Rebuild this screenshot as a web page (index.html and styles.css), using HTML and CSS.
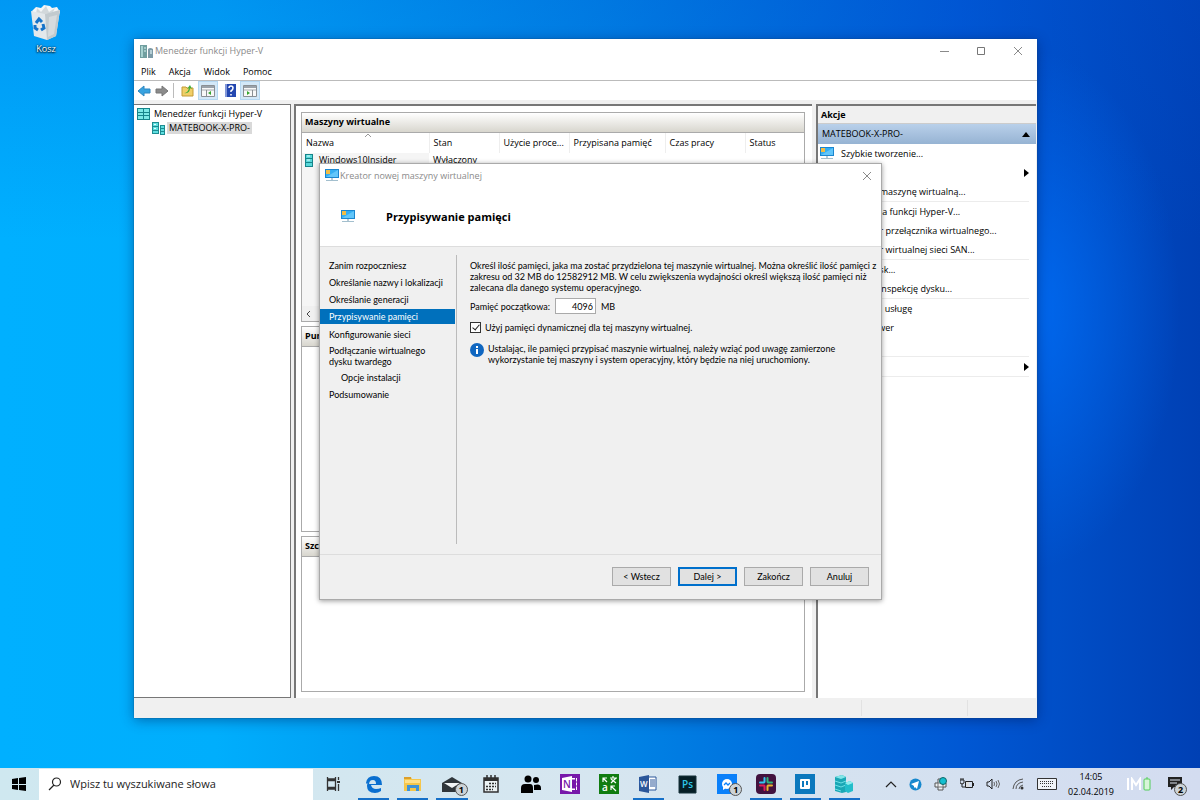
FILE: index.html
```html
<!DOCTYPE html>
<html lang="pl">
<head>
    <meta charset="UTF-8">
    <meta name="viewport" content="width=device-width, initial-scale=1.0">
    <title>Menedżer funkcji Hyper-V</title>
    <link rel="stylesheet" href="styles.css">
</head>
<body>
    <!-- shared icons -->
    <svg class="sprite" aria-hidden="true">
        <symbol id="vm" viewBox="0 0 14 13">
            <path d="M0 0h14v9H0z" fill="#1b86cf"/>
            <path d="M1 1h12v7H1z" fill="#35aef2"/>
            <path d="M1 8l12-7v7z" fill="#62c6fa"/>
            <path d="M1 1h4v4H1z" fill="#f2bd45"/>
            <path d="M6 9h2v2H6z" fill="#b9cbd6"/>
            <path d="M1 11h12v1H1z" fill="#a3bfce"/>
        </symbol>
        <symbol id="servers" viewBox="0 0 13 13">
            <path d="M0 0h7v12H0zM8 3h5v10H8z" fill="#1d8c92"/>
            <path d="M1 1h5v3H1zM1 5h5v3H1zM1 9h5v2H1zM9 4h3v2H9zM9 7h3v2H9zM9 10h3v2H9z" fill="#5fdfe0"/>
            <path d="M2 2h2v1H2zM2 6h2v1H2z" fill="#e4ffff"/>
        </symbol>
        <symbol id="close" viewBox="0 0 10 10">
            <path d="M1 1l8 8M9 1L1 9" stroke="#8a8a8a" fill="none"/>
        </symbol>
        <symbol id="panel" viewBox="0 0 14 12">
            <path d="M.5.5h13v11H.5z" fill="#f8f8f8" stroke="#8a8f94"/>
            <path d="M1 1h12v2H1z" fill="#9aa2aa"/>
            <path d="M1 5h12" stroke="#a5abb0"/>
        </symbol>
    </svg>

    <main class="desktop">
        <a class="shortcut" href="#">
            <svg width="34" height="36" viewBox="0 0 34 36">
                <path d="M3 7l4-4 5 1 3-3 6 1 2 2 5-1 3 5-2 4H5z" fill="#f4f6f7"/>
                <path d="M8 4l4 4 5-6 3 6 6-4-3 6H7z" fill="#d2d8db"/>
                <path d="M2 7l14 3 15-4-4 26-9 4-13-4z" fill="#e3e8eb"/>
                <path d="M16 10l15-4-4 26-9 4z" fill="#c2cace"/>
                <path d="M20 13l8-2-3 19-6 3z" fill="#d6dbde"/>
                <path d="M7 19l3-4 3 3M14 20l1 4-3 2M9 26l-3-2 0-3" fill="none" stroke="#1673c9" stroke-width="3"/>
            </svg>
            <span>Kosz</span>
        </a>

        <section class="window manager">
            <header class="titlebar">
                <svg width="14" height="13" viewBox="0 0 14 13">
                    <path d="M0 0h7v13H0z" fill="#719fa0"/>
                    <path d="M1 1h2v11H1z" fill="#a9d3d1"/>
                    <path d="M4 3h2M4 6h2" stroke="#d9f2ef"/>
                    <path d="M8 4q2-2 5 0v9H8z" fill="#7c9aa6"/>
                    <path d="M10 5h2v4h-2z" fill="#b5ced5"/>
                </svg>
                <h1>Menedżer funkcji Hyper-V</h1>
                <div class="window-buttons">
                    <button aria-label="Minimalizuj"><svg width="10" height="10"><path d="M1 5.500h9" stroke="#8a8a8a"/></svg></button>
                    <button aria-label="Maksymalizuj"><svg width="10" height="10"><path d="M1.500 1.500h7v7h-7z" fill="none" stroke="#777"/></svg></button>
                    <button aria-label="Zamknij"><svg width="10" height="10"><use href="#close"/></svg></button>
                </div>
            </header>

            <nav class="menubar">
                <button>Plik</button>
                <button>Akcja</button>
                <button>Widok</button>
                <button>Pomoc</button>
            </nav>

            <div class="toolbar">
                <button aria-label="Wstecz"><svg width="14" height="12"><path d="M1 6l6-5v3h6v4H7v3z" fill="#38a3e0" stroke="#2e86c0"/></svg></button>
                <button aria-label="Dalej"><svg width="14" height="12"><path d="M13 6L7 1v3H1v4h6v3z" fill="#8b8b8b" stroke="#777"/></svg></button>
                <span class="separator"></span>
                <button aria-label="W górę"><svg width="13" height="13"><path d="M1 3h4l1 1h6v8H1z" fill="#f1cf68" stroke="#c29b37"/><path d="M3 9q4 0 5-5l-2 1 3-4 2 4-2-1q0 6-6 5z" fill="#3fae3b"/></svg></button>
                <button class="on" aria-label="Drzewo konsoli"><svg width="14" height="12"><use href="#panel"/><path d="M5.500 5v7" stroke="#8a8f94"/><path d="M10 6v4L7 8z" fill="#35a52f"/></svg></button>
                <button aria-label="Pomoc"><svg width="11" height="13"><path d="M0 0h11v13H0z" fill="#2447b0"/><path d="M0 0h2v13H0z" fill="#8398d8"/><path d="M4 4q0-2 2-2t2 2-2 3v1M6 10v1.500" fill="none" stroke="#fff" stroke-width="1.500"/></svg></button>
                <button class="on" aria-label="Okienko akcji"><svg width="14" height="12"><use href="#panel"/><path d="M9.500 5v7" stroke="#8a8f94"/><path d="M4 6v4l3-2z" fill="#35a52f"/></svg></button>
            </div>

            <div class="panes">
                <ul class="tree">
                    <li><svg width="13" height="12" viewBox="0 0 13 12"><path d="M0 0h13v12H0z" fill="#16858b"/><path d="M1 1h5v3H1zM7 1h5v3H7zM1 5h5v2H1zM7 5h5v2H7zM1 8h5v3H1zM7 8h5v3H7z" fill="#7de9e6"/></svg><span>Menedżer funkcji Hyper-V</span></li>
                    <li class="child"><svg width="13" height="13"><use href="#servers"/></svg><span class="selected">MATEBOOK-X-PRO-</span></li>
                </ul>

                <div class="center">
                    <section class="group machines">
                        <h2>Maszyny wirtualne</h2>
                        <table>
                            <thead>
                                <tr>
                                    <th class="name">Nazwa<svg class="sort" width="6" height="4"><path d="M0 4l3-3 3 3" fill="none" stroke="#999"/></svg></th>
                                    <th class="narrow">Stan</th>
                                    <th class="narrow">Użycie proce...</th>
                                    <th class="memory">Przypisana pamięć</th>
                                    <th class="uptime">Czas pracy</th>
                                    <th>Status</th>
                                </tr>
                            </thead>
                            <tbody>
                                <tr>
                                    <td><span class="machine"><svg width="8" height="13"><path d="M0 0h8v13H0z" fill="#16858b"/><path d="M1 1h6v3H1zM1 5h6v3H1zM1 9h6v3H1z" fill="#58d8da"/><path d="M2 2h3M2 6h3" stroke="#e0ffff"/></svg>Windows10Insider</span></td>
                                    <td>Wyłączony</td>
                                    <td></td>
                                    <td></td>
                                    <td></td>
                                    <td></td>
                                </tr>
                            </tbody>
                        </table>
                        <div class="scroll"><button aria-label="Przewiń w lewo"><svg width="5" height="8"><path d="M4 1L1 4l3 3" fill="none" stroke="#444"/></svg></button></div>
                    </section>
                    <section class="group checkpoints">
                        <h2>Punkty kontrolne</h2>
                    </section>
                    <section class="group details">
                        <h2>Szczegóły</h2>
                    </section>
                </div>

                <aside class="actions">
                    <h2>Akcje</h2>
                    <h3>MATEBOOK-X-PRO-<svg width="8" height="5"><path d="M0 5l4-5 4 5z"/></svg></h3>
                    <ul>
                        <li><svg width="14" height="13"><use href="#vm"/></svg><span>Szybkie tworzenie...</span></li>
                        <li><svg class="more" width="5" height="8"><path d="M0 0l5 4-5 4z"/></svg></li>
                        <li class="indent">Importuj maszynę wirtualną...</li>
                        <li class="indent line">Ustawienia funkcji Hyper-V...</li>
                        <li class="indent">Menedżer przełącznika wirtualnego...</li>
                        <li class="indent">Menedżer wirtualnej sieci SAN...</li>
                        <li class="indent line">Edytuj dysk...</li>
                        <li class="indent">Wykonaj inspekcję dysku...</li>
                        <li class="indent line">Zatrzymaj usługę</li>
                        <li class="indent">Usuń serwer</li>
                        <li></li>
                        <li class="line last"><svg class="more" width="5" height="8"><path d="M0 0l5 4-5 4z"/></svg></li>
                    </ul>
                </aside>
            </div>

            <footer class="statusbar"><span></span><span></span></footer>
        </section>

        <section class="window wizard">
            <header class="titlebar">
                <svg width="14" height="13"><use href="#vm"/></svg>
                <h1>Kreator nowej maszyny wirtualnej</h1>
                <div class="window-buttons">
                    <button aria-label="Zamknij"><svg width="10" height="10"><use href="#close"/></svg></button>
                </div>
            </header>
            <div class="banner">
                <svg width="14" height="13"><use href="#vm"/></svg>
                <h2>Przypisywanie pamięci</h2>
            </div>
            <div class="wizard-body">
                <ol class="steps">
                    <li>Zanim rozpoczniesz</li>
                    <li>Określanie nazwy i lokalizacji</li>
                    <li>Określanie generacji</li>
                    <li class="current">Przypisywanie pamięci</li>
                    <li>Konfigurowanie sieci</li>
                    <li class="two-lines">Podłączanie wirtualnego<br>dysku twardego</li>
                    <li class="sub">Opcje instalacji</li>
                    <li>Podsumowanie</li>
                </ol>
                <form class="page">
                    <p>Określ ilość pamięci, jaka ma zostać przydzielona tej maszynie wirtualnej. Można określić ilość pamięci z<br>zakresu od 32 MB do 12582912 MB. W celu zwiększenia wydajności określ większą ilość pamięci niż<br>zalecana dla danego systemu operacyjnego.</p>
                    <div class="field">
                        <label for="memory">Pamięć początkowa:</label>
                        <input type="text" id="memory" value="4096">
                        <span>MB</span>
                    </div>
                    <div class="check">
                        <input type="checkbox" id="dynamic" checked>
                        <label for="dynamic">Użyj pamięci dynamicznej dla tej maszyny wirtualnej.</label>
                    </div>
                    <div class="info">
                        <svg width="14" height="14"><circle cx="7" cy="7" r="7" fill="#0f66c0"/><path d="M7 3v2M7 6v5" stroke="#fff" stroke-width="2"/></svg>
                        <p>Ustalając, ile pamięci przypisać maszynie wirtualnej, należy wziąć pod uwagę zamierzone<br>wykorzystanie tej maszyny i system operacyjny, który będzie na niej uruchomiony.</p>
                    </div>
                </form>
            </div>
            <footer class="wizard-buttons">
                <button>&lt; Wstecz</button>
                <button class="default">Dalej &gt;</button>
                <button>Zakończ</button>
                <button>Anuluj</button>
            </footer>
        </section>
    </main>

    <footer class="taskbar">
        <button class="start" aria-label="Start"><svg width="14" height="14"><path d="M0 2l6-1v6H0zM7 1l7-1v7H7zM0 8h6v5l-6-1zM7 8h7v6l-7-1z"/></svg></button>
        <div class="search">
            <svg width="14" height="14"><circle cx="8.500" cy="5" r="4" fill="none" stroke="#222" stroke-width="1.200"/><path d="M6 8l-5 5" stroke="#222" stroke-width="1.200"/></svg>
            <input type="text" placeholder="Wpisz tu wyszukiwane słowa" aria-label="Wyszukaj">
        </div>
        <button class="task-view" aria-label="Widok zadań"><svg width="14" height="14"><path d="M1.500 3.500h8v7h-8zM1.500 0v2h8V0M1.500 14v-2h8v2M12.500 0v3M12.500 7v7" fill="none" stroke="#333" stroke-width="1.300"/><path d="M11 4h3v2h-3z" fill="#333"/></svg></button>
        <div class="apps">
            <button class="running" aria-label="Edge"><svg width="18" height="18"><path d="M1 8Q2 1 9 1q8 0 8 9H6q1 4 5 4 3 0 5-1v3q-3 2-6 2-8 0-8-7 0-4 4-6-2 2-2 4h7q0-4-3-4-4 0-6 4z" fill="#0a6fd0"/></svg></button>
            <button class="running" aria-label="Eksplorator plików"><svg width="18" height="16"><path d="M0 1h7l1 2h9v12H0z" fill="#f5c64b"/><path d="M0 1h7v2H0z" fill="#dc9f2c"/><path d="M1 4h15v3H1z" fill="#ffe08a"/><path d="M3 9h12v6h-3v-3H6v3H3z" fill="#3f93d7"/></svg></button>
            <button class="running" aria-label="Poczta"><svg width="20" height="16"><path d="M0 7l10-6 10 6v9H0z" fill="#30363b"/><path d="M2 7h16l-8 5z" fill="#f2f5f6"/></svg><b class="badge">1</b></button>
            <button aria-label="Kalendarz"><svg width="16" height="18"><path d="M1 3h14v14H1z" fill="#edf3f4" stroke="#303030" stroke-width="1.500"/><path d="M1 3h14v3H1z" fill="#303030"/><path d="M4 0v4M8 0v4M12 0v4" stroke="#303030" stroke-width="1.500"/><path d="M6 8.500h7M3 11.500h10M3 14.500h7" stroke="#303030" stroke-width="1.500" stroke-dasharray="2 1"/></svg></button>
            <button aria-label="Kontakty"><svg width="20" height="18"><circle cx="7" cy="4" r="3.500"/><circle cx="15" cy="5" r="3"/><path d="M0 18v-5q0-4 4-4h5q3 0 3 4v5zM13 15v-5q7-2 7 3v2z"/></svg></button>
            <button aria-label="OneNote"><svg width="20" height="20"><path d="M0 0h20v20H0z" fill="#7719aa"/><path d="M11 4h6v12h-6" fill="#fff"/><path d="M12 5.500h3v9h-3z" fill="#7719aa"/><path d="M15.500 4v12M15 8h2M15 12h2" stroke="#7719aa"/><path d="M2 4l10-2v16L2 16z" fill="#fff"/><text x="3" y="14" fill="#7719aa">N</text></svg></button>
            <button aria-label="Tłumacz"><svg width="20" height="20"><path d="M0 0h20v20H0z" fill="#107c10"/><path d="M4 8V4h4M4 4l4 4M11 4h7M14 2v2M12 9l5-5M12 5l5 4M12 16v-4h4M12 12l5 5" fill="none" stroke="#fff" stroke-width="1.200"/><text x="3" y="17" fill="#fff">a</text></svg></button>
            <button class="running" aria-label="Word"><svg width="18" height="18"><path d="M9 2h8v13H9z" fill="#fff" stroke="#2b579a"/><path d="M11 5h5M11 7h5M11 9h5M11 11h5" stroke="#2b579a"/><path d="M0 2l10-2v18L0 16z" fill="#2b579a"/><text x="1" y="12" class="small" fill="#fff">W</text></svg></button>
            <button aria-label="Photoshop"><svg width="19" height="19"><path d="M1 1h17v17H1z" fill="#061e26" stroke="#17323a"/><text x="4" y="13" fill="#2ec5e8">Ps</text></svg></button>
            <button aria-label="Messenger"><svg width="20" height="20"><path d="M0 0h20v20H0z" fill="#0a80fa"/><circle cx="10" cy="10" r="5" fill="#fff"/><path d="M6 13v3l3-2z" fill="#fff"/><path d="M7 11l2-2 2 2 2-2" fill="none" stroke="#0a80fa" stroke-width="1.300"/></svg><b class="badge">1</b></button>
            <button class="running" aria-label="Slack"><svg width="20" height="20"><rect width="20" height="20" rx="4" fill="#42123f"/><g stroke-width="2" stroke-linecap="round"><path d="M8.500 4v4M4 8.500h4" stroke="#36c5f0"/><path d="M11.500 4v4M12 8.500h4" stroke="#2eb67d"/><path d="M4 11.500h4M8.500 12v4" stroke="#e01e5a"/><path d="M12 11.500h4M11.500 12v4" stroke="#ecb22e"/></g></svg></button>
            <button class="running" aria-label="Trello"><svg width="20" height="20"><path d="M0 0h20v20H0z" fill="#0b78bd"/><rect x="5" y="5" width="10" height="10" rx="1" fill="#fff"/><path d="M7 7h2v6H7zM11 7h2v4h-2z" fill="#0b78bd"/></svg></button>
            <button class="running" aria-label="Hyper-V"><svg width="20" height="18"><path d="M1 2l7-2 4 2v15l-4 1-7-2z" fill="#1ba7b5"/><path d="M1 2l7-2 4 2-5 2z" fill="#83e6e8"/><path d="M1 6l6 2 5-2M1 10l6 2 5-2M1 14l6 2" fill="none" stroke="#6ee0e6"/><path d="M11 8l5-2 3 2v8l-5 2-3-2z" fill="#23bdca"/><path d="M11 8l5-2 3 2-5 2z" fill="#91edee"/></svg></button>
        </div>
        <div class="tray">
            <svg width="12" height="8"><path d="M1 7l5-5 5 5" fill="none" stroke="#222" stroke-width="1.200"/></svg>
            <svg width="13" height="13"><circle cx="6.500" cy="6.500" r="6" fill="#1688ce"/><path d="M2 6l8-3-2 8-2-2-1 1V8z" fill="#fff"/></svg>
            <svg width="14" height="14"><path d="M1 6h3V2h5v4h3v4H9v3H4v-3H1z" fill="#edf0f2" stroke="#555"/><path d="M4 6h5v4H4z" fill="none" stroke="#777"/><circle cx="9" cy="4" r="3.500" fill="#13bfd0" stroke="#166"/></svg>
            <svg width="14" height="12"><path d="M5.500 3.500h7v6h-7zM13.500 5v3" fill="none" stroke="#222"/><path d="M0 2h4v3q-2 2-4 0zM1 0v2M3 0v2M2 6v3h3" fill="none" stroke="#222"/><path d="M6 4h3v5H6z" fill="#ddd"/></svg>
            <svg width="14" height="12"><path d="M1 4h2l3-3v10L3 8H1z" fill="none" stroke="#222"/><path d="M8 4q1 2 0 4M10 3q2 3 0 6M12 2q3 4 0 8" fill="none" stroke="#666"/></svg>
            <svg width="12" height="12"><path d="M1 11Q2 2 11 1M4 11q0-6 7-7M7 11q0-3 4-4" fill="none" stroke="#555"/><circle cx="10" cy="10" r="1.500" fill="#333"/></svg>
            <svg class="keyboard" width="20" height="12"><path d="M.5.5h19v11H.5z" fill="#f0f3f7" stroke="#333"/><path d="M3 3.500h14M3 5.500h14M5 8.500h10" stroke="#333" stroke-dasharray="1 1"/></svg>
        </div>
        <time class="clock" datetime="2019-04-02T14:05">14:05<br>02.04.2019</time>
        <svg class="battery" width="24" height="14"><path d="M1 1v12M5 13V2l4 6 4-6v11" fill="none" stroke="#fff" stroke-width="2"/><rect x="17" y="2" width="6" height="11" rx="1" fill="#d8f5d9" stroke="#53ce58"/><path d="M19 1h2" stroke="#53ce58"/></svg>
        <button class="notifications" aria-label="Powiadomienia"><svg width="14" height="14"><path d="M0 0h14v10H6l-3 3v-3H0z" fill="#222"/><path d="M2 3h10M2 6h7" stroke="#dce4f0"/></svg><b class="badge">2</b></button>
    </footer>
</body>
</html>
```
FILE: styles.css
```css
* {
    box-sizing: border-box;
}

body {
    margin: 0;
    height: 100vh;
    display: flex;
    flex-direction: column;
    overflow: hidden;
    font-family: "Open Sans", "Noto Sans", sans-serif;
    font-size: 9px;
    line-height: 12px;
    color: #000;
    background:
        radial-gradient(ellipse 150px 260px at 1030px 310px, rgba(0, 115, 255, 0.7), rgba(0, 90, 240, 0)),
        linear-gradient(180deg, rgba(0, 80, 210, 0.25), rgba(0, 150, 255, 0) 30%),
        linear-gradient(90deg, #00b0ff 0%, #00aefc 18%, #0086e6 50%, #0058d4 80%, #0040b4 100%);
}

h1, h2, h3, p, ul, ol {
    margin: 0;
    padding: 0;
    font-size: inherit;
    list-style: none;
}

button {
    padding: 0;
    border: 0;
    background: none;
    font: inherit;
    color: inherit;
}

button, svg {
    display: block;
    flex: none;
}

.sprite {
    position: absolute;
    width: 0;
    height: 0;
}

.desktop {
    position: relative;
    flex: 1;
}

.shortcut {
    display: flex;
    flex-direction: column;
    align-items: center;
    gap: 3px;
    width: 92px;
    padding-top: 4px;
    color: #fff;
    text-decoration: none;
    text-shadow: 0 1px 2px #000, 0 0 2px #000;
}

/* windows */
.window {
    position: absolute;
    display: flex;
    flex-direction: column;
}

.manager {
    top: 39px;
    right: 163px;
    bottom: 50px;
    left: 134px;
    background: #f0f0f0;
    box-shadow: 0 0 1px #14406c, 0 2px 12px rgba(0, 20, 80, 0.45);
}

.titlebar {
    display: flex;
    align-items: center;
    gap: 1px;
    height: 24px;
    padding-left: 6px;
    background: #fff;
    color: #8a8a8a;
}

.titlebar h1 {
    flex: 1;
    font-weight: 400;
}

.window-buttons {
    display: flex;
    padding-right: 1px;
}

.window-buttons button {
    display: flex;
    align-items: center;
    justify-content: center;
    width: 37px;
    height: 22px;
}

.menubar {
    display: flex;
    gap: 13px;
    height: 18px;
    padding: 0 7px;
    border-bottom: 1px solid #bbb;
    background: #fff;
}

.toolbar {
    display: flex;
    align-items: center;
    gap: 4px;
    height: 19px;
    margin-bottom: 4px;
    padding-left: 3px;
    background: #fff;
}

.separator {
    width: 1px;
    height: 15px;
    margin-right: 3px;
    background: #bbb;
}

.toolbar .on {
    margin-right: 3px;
    padding: 3px 2px 2px;
    border: 1px solid #b5d8f2;
    background: #d3e8f8;
}

.panes {
    flex: 1;
    display: flex;
    min-height: 0;
}

.tree {
    width: 157px;
    padding: 2px 3px;
    border: 1px solid #777;
    border-left: 0;
    background: #fff;
}

.tree li {
    display: flex;
    align-items: center;
    gap: 2px;
    height: 14px;
}

.tree span {
    padding: 0 2px;
}

.tree .child {
    padding-left: 15px;
}

.tree .selected {
    background: #d9d9d9;
}

.center {
    flex: 1;
    display: flex;
    flex-direction: column;
    gap: 4px;
    margin: 0 4px 0 3px;
    padding: 6px 7px 6px 5px;
    border-top: 2px solid #777;
    border-left: 2px solid #777;
    background: #fff;
}

.group {
    display: flex;
    flex-direction: column;
    border: 1px solid #aaa;
}

.group h2 {
    height: 20px;
    padding: 3px;
    border-bottom: 1px solid #aaa;
    background: linear-gradient(#fff, #d8d6ce);
}

.machines {
    height: 210px;
    background: linear-gradient(#f5f5f5, #f5f5f5) 0 0 / 127px 100% no-repeat;
}

.checkpoints {
    height: 206px;
}

.details {
    flex: 1;
}

table {
    width: 100%;
    table-layout: fixed;
    border-collapse: collapse;
}

th, td {
    padding: 0 4px;
    text-align: left;
    font-weight: 400;
    white-space: nowrap;
}

th {
    position: relative;
    height: 20px;
    border-right: 1px solid #eee;
    background: #fff;
}

th:last-child {
    border-right: 0;
}

td {
    height: 14px;
}

td:first-child {
    padding-left: 3px;
}

.name {
    width: 127px;
}

.narrow {
    width: 70px;
}

.memory {
    width: 96px;
}

.uptime {
    width: 80px;
}

.sort {
    position: absolute;
    top: 0;
    left: 50%;
}

.machine {
    display: flex;
    align-items: center;
    gap: 6px;
}

.scroll {
    display: flex;
    align-items: center;
    height: 15px;
    margin-top: auto;
    padding-left: 4px;
    background: #f0f0f0;
}

.actions {
    width: 220px;
    margin-right: 1px;
    border-top: 2px solid #777;
    border-left: 2px solid #777;
    background: #fff;
}

.actions h2 {
    height: 18px;
    padding: 3px;
    border-bottom: 1px solid #ccc;
    background: #f0f0f0;
}

.actions h3 {
    display: flex;
    align-items: center;
    justify-content: space-between;
    height: 20px;
    padding: 0 6px 0 4px;
    background: linear-gradient(#b9d0ea, #96b3d3);
    font-weight: 400;
}

.actions li {
    display: flex;
    align-items: center;
    gap: 7px;
    height: 19px;
    margin-right: 7px;
    padding-left: 2px;
}

.actions .indent {
    padding-left: 23px;
}

.actions .line {
    height: 20px;
    border-top: 1px solid #ececec;
}

.actions .last {
    height: 21px;
    border-bottom: 1px solid #ececec;
}

.more {
    margin-left: auto;
}

.statusbar {
    display: flex;
    justify-content: flex-end;
    height: 20px;
    padding: 2px 0;
}

.statusbar span {
    width: 106px;
    border-left: 1px solid #e2e2e2;
}

.statusbar span:last-child {
    width: 70px;
}

/* wizard */
.wizard {
    top: 163px;
    left: 319px;
    width: 563px;
    height: 437px;
    border: 1px solid #aaa;
    background: #f0f0f0;
    box-shadow: 0 1px 5px rgba(0, 0, 0, 0.4);
}

.wizard .titlebar {
    height: 23px;
    padding-left: 5px;
}

.wizard .window-buttons button {
    width: 26px;
}

.banner {
    display: flex;
    align-items: center;
    gap: 31px;
    height: 60px;
    padding-left: 21px;
    border-bottom: 1px solid #ddd;
    background: #fff;
}

.banner h2 {
    font-size: 11px;
}

.wizard-body {
    flex: 1;
    display: flex;
    padding: 8px 0 10px;
    font-family: Lato, "Liberation Sans", sans-serif;
    line-height: 11px;
}

.steps {
    flex: none;
    width: 137px;
    padding: 2px 1px 0 0;
    border-right: 1px solid #bbb;
}

.steps li {
    padding: 3px 9px;
}

.steps .current {
    margin: 1px 0 2px;
    padding: 2px 9px;
    background: #0070bc;
    color: #fff;
}

.steps .two-lines {
    padding: 2px 9px;
}

.steps .sub {
    padding-left: 21px;
}

.page {
    display: flex;
    flex-direction: column;
    gap: 5px;
    padding: 5px 13px;
    white-space: nowrap;
}

.field, .check {
    display: flex;
    align-items: center;
    gap: 5px;
}

.field input {
    width: 41px;
    height: 16px;
    padding: 0 2px;
    border: 1px solid #aaa;
    background: #fff;
    font: inherit;
    text-align: right;
}

.check {
    gap: 4px;
    height: 16px;
}

.check input {
    width: 11px;
    height: 11px;
    margin: 0;
    appearance: none;
    border: 1px solid #333;
    background: #fff;
}

.check input:checked::before {
    content: "";
    display: block;
    width: 3px;
    height: 6px;
    margin: 0 3px;
    border: solid #222;
    border-width: 0 1px 1px 0;
    transform: rotate(40deg);
}

.info {
    display: flex;
    gap: 4px;
    padding-top: 3px;
}

.wizard-buttons {
    display: flex;
    justify-content: flex-end;
    gap: 7px;
    height: 45px;
    padding: 12px 12px 0;
    border-top: 1px solid #ddd;
    font-family: Lato, "Liberation Sans", sans-serif;
}

.wizard-buttons button {
    width: 59px;
    height: 19px;
    border: 1px solid #aaa;
    background: #e1e1e1;
}

.wizard-buttons .default {
    border: 2px solid #0070cc;
}

/* taskbar */
.taskbar {
    display: flex;
    align-items: center;
    height: 32px;
    background: linear-gradient(90deg, #cfe8f0, #d6e6f0 50%, #d3dcf0);
}

.start {
    padding: 0 13px 0 12px;
}

.search {
    display: flex;
    align-items: center;
    gap: 8px;
    width: 274px;
    height: 31px;
    padding-left: 9px;
    background: #fff;
}

.search input {
    flex: 1;
    min-width: 0;
    padding: 0;
    border: 0;
    background: none;
    font: inherit;
    font-size: 11px;
}

.search input::placeholder {
    color: #222;
}

.task-view {
    padding: 0 14px 0 13px;
}

.apps {
    display: flex;
    width: 510px;
    height: 32px;
}

.apps button {
    position: relative;
    flex: 1;
    display: flex;
    align-items: center;
    justify-content: center;
}

.apps .running::after {
    content: "";
    position: absolute;
    right: 4px;
    bottom: 0;
    left: 4px;
    height: 2px;
    background: #1670c8;
}

.apps text {
    font-size: 10px;
    font-weight: 600;
}

.apps .small {
    font-size: 8px;
}

.badge {
    position: absolute;
    right: 4px;
    bottom: 4px;
    width: 13px;
    height: 13px;
    border: 1px solid #555;
    border-radius: 50%;
    background: #ccd3d7;
    font-size: 9px;
    line-height: 11px;
    text-align: center;
}

.tray {
    display: flex;
    align-items: center;
    gap: 12px;
    margin-left: auto;
}

.keyboard {
    margin-left: 1px;
}

.clock {
    margin: 0 13px 0 11px;
    line-height: 15px;
    text-align: center;
}

.notifications {
    position: relative;
    margin: 0 18px 0 17px;
}

.notifications .badge {
    right: -5px;
    bottom: -5px;
}
```
